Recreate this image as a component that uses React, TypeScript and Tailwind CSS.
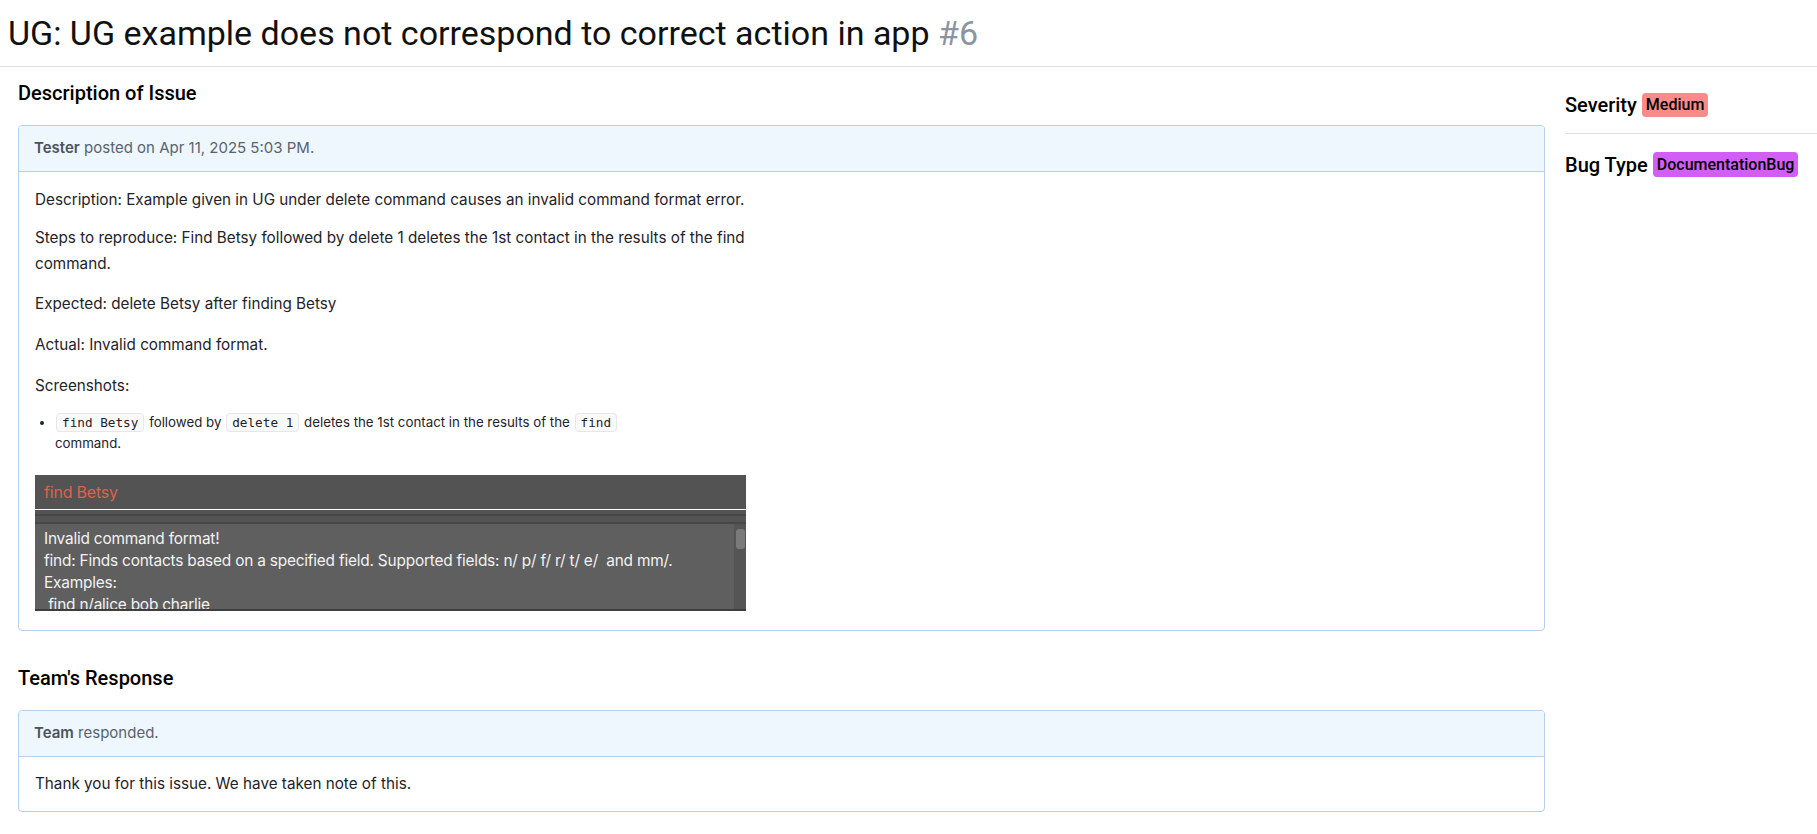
import React from "react";

const body = "font-['Inter',_'Noto_Sans',_sans-serif]";

function Code({ children }: { children: React.ReactNode }) {
  return (
    <code className="font-['DejaVu_Sans_Mono',_monospace] text-[12.7px] px-[5px] py-[1px] mx-[1px] rounded-[4px] border border-[#e5e7eb] bg-[#fafafa] text-[#1f2328]">
      {children}
    </code>
  );
}

function AppShot() {
  return (
    <div className="w-[711px] mt-[22px] font-['Inter',_sans-serif]">
      <div className="h-[34px] bg-[#535353] flex items-center pl-[9px] text-[16px] text-[#d9634d] tracking-[-0.2px]">
        find Betsy
      </div>
      <div className="h-px bg-white" />
      <div className="h-[4px] bg-[#545454]" />
      <div className="h-[2px] bg-[#474747]" />
      <div className="h-[6px] bg-[#545454]" />
      <div className="h-[2px] bg-[#474747]" />
      <div className="flex h-[85px] bg-[#5f5f5f] overflow-hidden">
        <div className="flex-1 pl-[9px] pt-[4px] text-[15.4px] leading-[22px] text-[#f2f2f2] tracking-[-0.2px]">
          <div>Invalid command format!</div>
          <div>find: Finds contacts based on a specified field. Supported fields: n/ p/ f/ r/ t/ e/&nbsp; and mm/.</div>
          <div>Examples:</div>
          <div>&nbsp;find n/alice bob charlie</div>
        </div>
        <div className="w-[12px] bg-[#555555] pt-[5px] pl-[2px]">
          <div className="w-[9px] h-[20px] rounded-[3px] bg-[#7a7a7a]" />
        </div>
      </div>
      <div className="h-[2px] bg-[#3e3e3e]" />
    </div>
  );
}

export default function App() {
  return (
    <div className="min-h-screen bg-white font-['Roboto',_sans-serif] text-black">
      <div className="h-[66px] flex items-center pl-[8px]">
        <h1 className="text-[34px] leading-[40px] font-normal text-[#111]">
          UG: UG example does not correspond to correct action in app <span className="text-[#8c959f]">#6</span>
        </h1>
      </div>
      <div className="h-px bg-[#e0e0e0]" />
      <div className="flex">
        <div className="w-[1545px] pl-[18px]">
          <h3 className="mt-[14px] mb-[20px] text-[20px] leading-[24px] font-medium">Description of Issue</h3>
          <div className="border border-[#b6cfea] rounded-[4px] overflow-hidden">
            <div className={`h-[46px] bg-[#eef6fe] border-b border-[#b6cfea] flex items-center px-[15px] text-[15px] text-[#59636e] ${body}`}>
              <span className="font-semibold text-[#4b535c]">Tester</span>&nbsp;posted on Apr 11, 2025 5:03 PM.
            </div>
            <div className={`px-[16px] pt-[15px] pb-[19px] text-[15.25px] leading-[26px] text-[#1f2328] ${body}`}>
              <p className="mb-[12px]">Description: Example given in UG under delete command causes an invalid command format error.</p>
              <p className="mb-[14px]">
                Steps to reproduce: Find Betsy followed by delete 1 deletes the 1st contact in the results of the find
                <br />
                command.
              </p>
              <p className="mb-[15px]">Expected: delete Betsy after finding Betsy</p>
              <p className="mb-[15px]">Actual: Invalid command format.</p>
              <p className="mb-[13px]">Screenshots:</p>
              <ul className="list-disc pl-[20px] text-[13.3px] leading-[20px]">
                <li>
                  <Code>find Betsy</Code> followed by <Code>delete 1</Code> deletes the 1st contact in the results of the <Code>find</Code>
                  <br />
                  command.
                </li>
              </ul>
              <AppShot />
            </div>
          </div>

          <h3 className="mt-[35px] mb-[20px] text-[20px] leading-[24px] font-medium">Team's Response</h3>
          <div className="border border-[#b6cfea] rounded-[4px] overflow-hidden">
            <div className={`h-[46px] bg-[#eef6fe] border-b border-[#b6cfea] flex items-center px-[15px] text-[15px] text-[#59636e] ${body}`}>
              <span className="font-semibold text-[#4b535c]">Team</span>&nbsp;responded.
            </div>
            <div className={`px-[16px] pt-[14px] pb-[14px] text-[15.25px] leading-[26px] text-[#1f2328] ${body}`}>
              <p>Thank you for this issue. We have taken note of this.</p>
            </div>
          </div>
        </div>

        <div className="flex-1 pl-[20px]">
          <div className="mt-[26px] h-[24px] flex items-center gap-[5px]">
            <span className="text-[20px] font-medium">Severity</span>
            <span className="h-[24px] px-[4px] rounded-[4px] bg-[#f98b8b] text-[16px] font-medium flex items-center">Medium</span>
          </div>
          <div className="mt-[16px] h-px bg-[#e0e0e0]" />
          <div className="mt-[18px] h-[25px] flex items-center gap-[5px]">
            <span className="text-[20px] font-medium">Bug Type</span>
            <span className="h-[25px] px-[4px] rounded-[4px] bg-[#d35ef6] text-[16px] font-medium flex items-center">DocumentationBug</span>
          </div>
        </div>
      </div>
    </div>
  );
}
